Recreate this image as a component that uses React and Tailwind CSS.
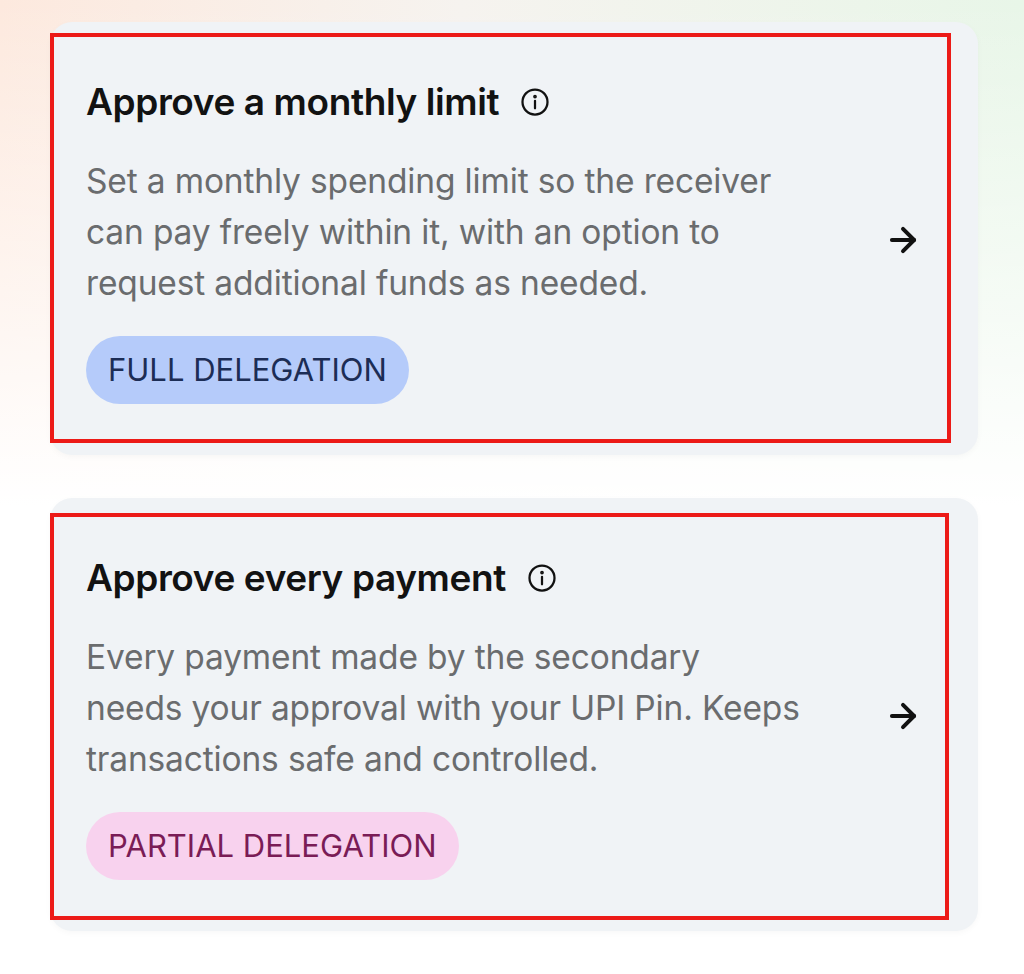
import { ArrowRight } from "lucide-react";

function InfoIcon() {
  return (
    <svg width="30" height="30" viewBox="0 0 24 24" fill="none" stroke="#111" strokeWidth="1.8" strokeLinecap="round">
      <circle cx="12" cy="12" r="10" />
      <path d="M12 11v6" />
      <circle cx="12" cy="7.6" r="0.6" fill="#111" />
    </svg>
  );
}

function OptionCard({ title, lines, badge, badgeClass, redClass }) {
  return (
    <div className="relative w-[928px] h-[433px] rounded-[22px] bg-[#f0f3f6] shadow-[0_2px_6px_rgba(0,0,0,0.03)] pl-[36px] pr-[56px] pt-[60px]">
      <div className="flex items-center justify-between">
        <div className="flex flex-col">
          <div className="flex items-center gap-[21px] h-[40px]">
            <h3 className="text-[37px] leading-[40px] font-semibold text-[#121212] tracking-[-0.4px]">{title}</h3>
            <InfoIcon />
          </div>
          <p className="mt-[34px] text-[33.5px] leading-[51px] text-[#6a6c6e] tracking-[-0.15px]">
            {lines.map((l, i) => (
              <span key={i} className="block">{l}</span>
            ))}
          </p>
          <div className="mt-[27px]">
            <span className={`inline-flex items-center h-[68px] px-[22px] rounded-full text-[31px] ${badgeClass}`}>
              {badge}
            </span>
          </div>
        </div>
        <ArrowRight size={38} strokeWidth={2.5} className="text-[#111] -mt-[6px]" />
      </div>
      <div className={`absolute left-0 border-[4px] border-[#ec1a17] pointer-events-none ${redClass}`} />
    </div>
  );
}

export default function App() {
  return (
    <div
      className="w-[1024px] h-[974px] overflow-hidden bg-[linear-gradient(to_bottom,rgba(255,255,255,0)_0%,rgba(255,255,255,0.55)_30%,#ffffff_52%),linear-gradient(to_right,#fde9de_0%,#f6f3ef_45%,#e8f6e8_100%)] pt-[22px] pl-[50px]"
      style={{ fontFamily: "Inter, 'Noto Sans', sans-serif" }}
    >
      <OptionCard
        title="Approve a monthly limit"
        lines={[
          "Set a monthly spending limit so the receiver",
          "can pay freely within it, with an option to",
          "request additional funds as needed.",
        ]}
        badge="FULL DELEGATION"
        badgeClass="bg-[#b5cbfa] text-[#1c2d55]"
        redClass="top-[11px] w-[901px] h-[410px]"
      />
      <div className="h-[43px]" />
      <OptionCard
        title="Approve every payment"
        lines={[
          "Every payment made by the secondary",
          "needs your approval with your UPI Pin. Keeps",
          "transactions safe and controlled.",
        ]}
        badge="PARTIAL DELEGATION"
        badgeClass="bg-[#f8d2ee] text-[#7a1c56]"
        redClass="top-[15px] -left-[1px] w-[899px] h-[407px]"
      />
    </div>
  );
}
